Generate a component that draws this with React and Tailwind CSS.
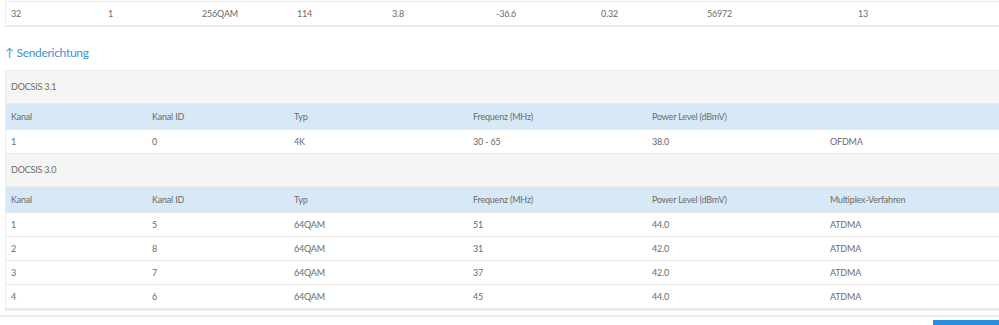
const upCols = [
  { label: "Kanal", w: "w-[141px]" },
  { label: "Kanal ID", w: "w-[142px]" },
  { label: "Typ", w: "w-[179px]" },
  { label: "Frequenz (MHz)", w: "w-[179px]" },
  { label: "Power Level (dBmV)", w: "w-[178px]" },
  { label: "Multiplex-Verfahren", w: "w-[200px]" },
];

const topWidths = ["w-[97px]", "w-[94px]", "w-[95px]", "w-[95px]", "w-[104px]", "w-[105px]", "w-[106px]", "w-[151px]", "w-[160px]"];
const topRow = ["32", "1", "256QAM", "114", "3.8", "-36.6", "0.32", "56972", "13"];

const docsis31 = [["1", "0", "4K", "30 - 65", "38.0", "OFDMA"]];
const docsis30 = [
  ["1", "5", "64QAM", "51", "44.0", "ATDMA"],
  ["2", "8", "64QAM", "31", "42.0", "ATDMA"],
  ["3", "7", "64QAM", "37", "42.0", "ATDMA"],
  ["4", "6", "64QAM", "45", "44.0", "ATDMA"],
];

function Row({ cells, className = "" }) {
  return (
    <div className={`flex h-[24px] items-center border-b border-[#e8e8e8] ${className}`}>
      {cells.map((c, i) => (
        <div key={i} className={`${upCols[i].w} shrink-0 pl-[5px]`}>
          {c}
        </div>
      ))}
    </div>
  );
}

function Section({ title, rows, header }) {
  return (
    <>
      <div className="flex h-[33px] items-center bg-[#f5f5f3] pl-[5px] border-b border-[#ebebeb]">{title}</div>
      <Row cells={header} className="bg-[#d7e8f6] h-[26px] border-[#d7e8f6]" />
      {rows.map((r, i) => (
        <Row key={i} cells={r} className="bg-white" />
      ))}
    </>
  );
}

export default function App() {
  return (
    <div
      className="relative w-[999px] h-[325px] overflow-hidden bg-white text-[9px] tracking-[-0.2px] text-[#6b6b6b]"
      style={{ fontFamily: "Lato, sans-serif" }}
    >
      <div className="ml-[5px] w-[1020px] mt-[1px] border border-[#ececec] border-b-2">
        <div className="flex h-[23px] items-center">
          {topRow.map((c, i) => (
            <div key={i} className={`${topWidths[i]} shrink-0 pl-[5px]`}>
              {c}
            </div>
          ))}
        </div>
      </div>

      <h3 className="mt-[17px] ml-[5px] text-[12px] tracking-[-0.3px] leading-[18px] text-[#4590d8]">↑ Senderichtung</h3>

      <div className="mt-[8px] ml-[5px] w-[1020px] border border-[#ececec] border-b-2">
        <Section title="DOCSIS 3.1" header={["Kanal", "Kanal ID", "Typ", "Frequenz (MHz)", "Power Level (dBmV)", ""]} rows={docsis31} />
        <Section
          title="DOCSIS 3.0"
          header={["Kanal", "Kanal ID", "Typ", "Frequenz (MHz)", "Power Level (dBmV)", "Multiplex-Verfahren"]}
          rows={docsis30}
        />
      </div>

      <div className="mt-[4px] border-t-2 border-[#ececec]" />
      <div className="absolute left-[933px] top-[320px] h-[10px] w-[70px] bg-[#2a8de0]" />
    </div>
  );
}
